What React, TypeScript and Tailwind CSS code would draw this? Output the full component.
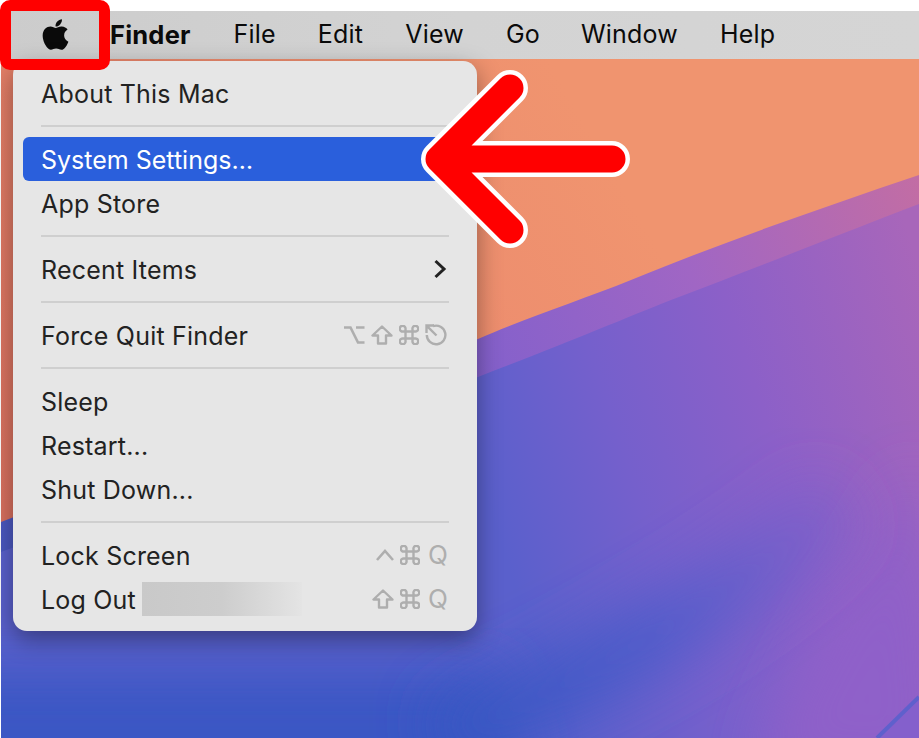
import type { ReactNode } from 'react';
import { FaApple } from 'react-icons/fa';

const menuBar = [
  { label: 'File', className: 'ml-[43px]' },
  { label: 'Edit', className: 'ml-[42px]' },
  { label: 'View', className: 'ml-[42px]' },
  { label: 'Go', className: 'ml-[42px]' },
  { label: 'Window', className: 'ml-[41px]' },
  { label: 'Help', className: 'ml-[42px]' },
];

function Option() {
  return (
    <svg width="22" height="18" viewBox="0 0 22 18" fill="none" stroke="#aeaeae" strokeWidth="2.6">
      <path d="M1 1.500h6.500L15 16.500h6.500M13 1.500h8.500" />
    </svg>
  );
}

function Shift() {
  return (
    <svg width="22" height="20" viewBox="0 0 22 20" fill="none" stroke="#aeaeae" strokeWidth="2.4" strokeLinejoin="round">
      <path d="M11 1.500 1.500 10.500H7v8h8v-8h5.500z" />
    </svg>
  );
}

function Cmd() {
  return (
    <svg width="20" height="20" viewBox="0 0 20 20" fill="none" stroke="#aeaeae" strokeWidth="2.4">
      <path d="M6.500 6.500h7v7h-7zM6.500 6.500H4.200a2.900 2.900 0 1 1 2.300-2.400zM13.500 6.500V4.200a2.900 2.900 0 1 1 2.400 2.300zM13.500 13.500h2.300a2.900 2.900 0 1 1-2.300 2.400zM6.500 13.500v2.300a2.900 2.900 0 1 1-2.400-2.300z" />
    </svg>
  );
}

function Restart() {
  return (
    <svg width="22" height="22" viewBox="0 0 22 22" fill="none" stroke="#aeaeae" strokeWidth="2.400">
      <path d="M8 2.200A9.300 9.300 0 1 1 1.800 11M9 1.500H1.500V9M1.800 1.800l9.700 9.700" />
    </svg>
  );
}

function Ctrl() {
  return (
    <svg width="18" height="12" viewBox="0 0 18 12" fill="none" stroke="#aeaeae" strokeWidth="2.600">
      <path d="M1 11 9 2l8 9" />
    </svg>
  );
}

function Q() {
  return <span className="w-[19px] ml-[2px] text-[26px] leading-none text-[#aeaeae]">Q</span>;
}

function Row({ label, right }: { label: ReactNode; right?: ReactNode }) {
  return (
    <div className="flex items-center justify-between h-[44px] pl-[28px] pr-[30px]">
      <span className="flex items-center mt-[4px]">{label}</span>
      {right && <span className="flex items-center gap-[6px]">{right}</span>}
    </div>
  );
}

function Sep() {
  return <div className="h-[2px] my-[10px] mx-[28px] bg-[#cfcfcf]" />;
}

export default function App() {
  return (
    <div className="relative w-[919px] h-[738px] bg-white overflow-hidden pt-[11px] text-[25px] tracking-[0.2px] font-['Inter','Liberation_Sans',sans-serif]">
      {/* Menu bar */}
      <div className="relative h-[48px] ml-[1px] flex items-center bg-gradient-to-r from-[#cccccc] via-[#d3d3d3] to-[#d5d5d5] text-[#0a0a0a]">
        <div className="w-[109px] flex items-center justify-center">
          <FaApple size={35} className="-mt-[2px]" />
        </div>
        <span className="font-bold text-[25.500px]">Finder</span>
        {menuBar.map((item) => (
          <span key={item.label} className={item.className}>
            {item.label}
          </span>
        ))}
      </div>

      {/* Wallpaper */}
      <svg className="block ml-[1px]" width="918" height="679" viewBox="0 59 918 679">
        <defs>
          <linearGradient id="orange" gradientUnits="userSpaceOnUse" x1="0" y1="500" x2="600" y2="150">
            <stop offset="0" stopColor="#d9705f" />
            <stop offset="0.6" stopColor="#ec8b6e" />
            <stop offset="1" stopColor="#f0946f" />
          </linearGradient>
          <linearGradient id="band" gradientUnits="userSpaceOnUse" x1="0" y1="540" x2="918" y2="180">
            <stop offset="0" stopColor="#4a58c0" />
            <stop offset="0.5" stopColor="#8260cc" />
            <stop offset="0.75" stopColor="#a066c4" />
            <stop offset="1" stopColor="#c26da4" />
          </linearGradient>
          <linearGradient id="deep" gradientUnits="userSpaceOnUse" x1="460" y1="420" x2="920" y2="270">
            <stop offset="0" stopColor="#5a60cc" />
            <stop offset="0.3" stopColor="#7560cc" />
            <stop offset="0.6" stopColor="#8c60c8" />
            <stop offset="1" stopColor="#a866ba" />
          </linearGradient>
          <linearGradient id="stream" gradientUnits="userSpaceOnUse" x1="440" y1="740" x2="840" y2="500">
            <stop offset="0" stopColor="#3456c2" />
            <stop offset="0.5" stopColor="#4e5cca" />
            <stop offset="1" stopColor="#7060cc" stopOpacity="0.4" />
          </linearGradient>
          <filter id="soft" x="-30%" y="-30%" width="160%" height="160%">
            <feGaussianBlur stdDeviation="28" />
          </filter>
          <clipPath id="deepClip">
            <path d="M0 552 477 377C560 345 620 320 670 300 770 262 850 230 918 204V738H0Z" />
          </clipPath>
        </defs>
        <rect x="0" y="59" width="918" height="679" fill="url(#orange)" />
        <path d="M0 522 477 339C520 320 580 300 630 280 720 243 820 208 918 175V738H0Z" fill="url(#band)" />
        <g clipPath="url(#deepClip)">
          <rect x="0" y="200" width="918" height="538" fill="url(#deep)" />
          <path d="M918 470C870 560 800 660 760 770H940Z" fill="#8f60c9" filter="url(#soft)" />
          {/* blue stream running up from the bottom left */}
          <path d="M-60 670H500L530 810H-60Z" fill="#3a57c4" filter="url(#soft)" />
          <path d="M440 740C560 690 720 610 840 500" stroke="url(#stream)" strokeWidth="70" fill="none" filter="url(#soft)" />
          <path d="M876 738 918 697V738Z" fill="#8460cc" />
          <path d="M876 738 918 697" stroke="#5f60cc" strokeWidth="4" />
        </g>
      </svg>

      {/* Apple menu */}
      <div className="absolute left-[13px] top-[61px] w-[464px] h-[570px] pt-[10px] rounded-[14px] bg-[#e6e6e6] text-[#222222] shadow-[0_8px_24px_rgba(0,0,0,0.38)]">
        <Row label="About This Mac" />
        <Sep />
        <div className="mx-[10px] rounded-[6px] bg-[#2a5fdc] text-white tracking-normal">
          <div className="flex items-center h-[44px] pl-[18px] pt-[4px]">System Settings…</div>
        </div>
        <Row label="App Store" />
        <Sep />
        <Row
          label="Recent Items"
          right={
            <svg width="14" height="20" viewBox="0 0 14 20" fill="none" stroke="#222222" strokeWidth="3">
              <path d="M2.500 2 11 10l-8.500 8" />
            </svg>
          }
        />
        <Sep />
        <Row
          label="Force Quit Finder"
          right={
            <>
              <Option />
              <Shift />
              <Cmd />
              <Restart />
            </>
          }
        />
        <Sep />
        <Row label="Sleep" />
        <Row label="Restart..." />
        <Row label="Shut Down..." />
        <Sep />
        <Row
          label="Lock Screen"
          right={
            <>
              <Ctrl />
              <Cmd />
              <Q />
            </>
          }
        />
        <Row
          label={
            <>
              Log Out
              <span className="ml-[6px] -mt-[4px] w-[160px] h-[34px] bg-gradient-to-r from-[#c9c9c9] via-[#cdcdcd] to-[#e4e4e4]" />
            </>
          }
          right={
            <>
              <Shift />
              <Cmd />
              <Q />
            </>
          }
        />
      </div>

      {/* Red highlight round the apple */}
      <div className="absolute left-0 top-0 w-[110px] h-[70px] rounded-[10px] border-[11px] border-[#ff0000]" />

      {/* Arrow */}
      <svg className="absolute left-[420px] top-[68px]" width="212" height="182" viewBox="420 68 212 182" fill="none" strokeLinecap="round" strokeLinejoin="round">
        <path d="M510 88 439 159l71 71M439 159H612" stroke="#ffffff" strokeWidth="36" />
        <path d="M510 88 439 159l71 71M439 159H612" stroke="#ff0000" strokeWidth="27" />
      </svg>
    </div>
  );
}
